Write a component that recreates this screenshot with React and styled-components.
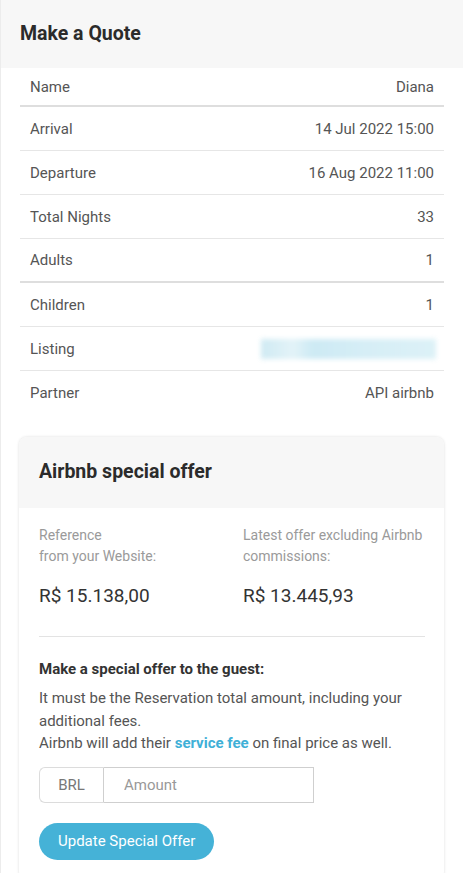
import React from "react";
import styled, {createGlobalStyle} from "styled-components";


const GlobalStyle = createGlobalStyle`
  body {
    margin: 0;
    background: #fff;
    font-family: Roboto, "Liberation Sans", sans-serif;
  }
`;


const Page = styled.div`
  border-left: 1px solid #ececec;
  min-height: 873px;
  box-sizing: border-box;
`;


const Header = styled.div`
  background: #f7f7f7;
  height: 68px;
  display: flex;
  align-items: center;
  padding-left: 19px;
  padding-bottom: 2px;
  box-sizing: border-box;
`;


const Title = styled.h2`
  margin: 0;
  font-size: 19.5px;
  font-weight: 700;
  color: #2b2b2b;
`;


const Table = styled.div`
  margin: 0 19px;
`;


const Row = styled.div`
  display: flex;
  justify-content: space-between;
  align-items: center;
  height: ${p => p.$first ? 37 : p.$thick ? 42 : 43}px;
  padding: 0 10px;
  font-size: 15px;
  color: #555;
  border-bottom: ${p => p.$last ? "none" : p.$thick ? "2px solid #dedede" : "1px solid #e6e6e6"};
`;


const Blurred = styled.span`
  display: inline-block;
  width: 175px;
  height: 20px;
  background: linear-gradient(90deg, #cfeaf3 0%, #e3f3f8 18%, #cdeaf4 30%, #d6eef6 60%, #dcf1f7 100%);
  filter: blur(2.5px);
  margin-right: -2px;
`;


const Card = styled.div`
  margin: 23px 19px 0 18px;
  border-radius: 8px;
  box-shadow: 0 0 3px rgba(0, 0, 0, 0.14);
  overflow: hidden;
  background: #fff;
`;


const CardHeader = styled.div`
  background: #f7f7f7;
  height: 71px;
  display: flex;
  align-items: center;
  padding-left: 20px;
  padding-bottom: 2px;
  box-sizing: border-box;
`;


const CardBody = styled.div`
  padding: 17px 19px 20px 20px;
`;


const Columns = styled.div`
  display: grid;
  grid-template-columns: 204px 1fr;
  padding-bottom: 29px;
  border-bottom: 1px solid #e3e3e3;
`;


const Label = styled.div`
  font-size: 14px;
  line-height: 21px;
  color: #9a9a9a;
`;


const Amount = styled.div`
  font-size: 19px;
  line-height: 22px;
  color: #333;
  margin-top: 18px;
`;


const SubTitle = styled.div`
  font-size: 15px;
  line-height: 18px;
  font-weight: 700;
  color: #333;
  margin-top: 23px;
`;


const Text = styled.p`
  margin: 9px 0 0;
  font-size: 15px;
  line-height: 22.5px;
  color: #555;
`;


const Link = styled.span`
  color: #3fb0d7;
  font-weight: 700;
`;


const InputGroup = styled.div`
  display: flex;
  width: 275px;
  height: 36px;
  margin-top: 12px;
`;


const Addon = styled.div`
  flex: none;
  width: 65px;
  box-sizing: border-box;
  display: flex;
  align-items: center;
  justify-content: center;
  border: 1px solid #dcdcdc;
  border-right: 1px solid #cfcfcf;
  border-radius: 6px 0 0 6px;
  font-size: 15px;
  color: #777;
`;


const Input = styled.input`
  flex: 1;
  min-width: 0;
  width: 0;
  border: 1px solid #cfcfcf;
  border-left: none;
  padding: 0 20px;
  font-family: inherit;
  font-size: 15px;
  outline: none;
  &::placeholder {
    color: #999;
  }
`;


const Button = styled.button`
  margin-top: 20px;
  height: 37px;
  padding: 0 19px;
  border: none;
  border-radius: 19px;
  background: #45b2d7;
  color: #fff;
  font-family: inherit;
  font-size: 15px;
`;


const rows = [
    ["Name", "Diana"],
    ["Arrival", "14 Jul 2022 15:00"],
    ["Departure", "16 Aug 2022 11:00"],
    ["Total Nights", "33"],
    ["Adults", "1"],
    ["Children", "1"],
    ["Listing", null],
    ["Partner", "API airbnb"],
];


const App = () => (
    <Page>
        <GlobalStyle/>
        <Header>
            <Title>Make a Quote</Title>
        </Header>

        <Table>
            {rows.map(([label, value], i) => (
                <Row key={label} $first={i === 0} $thick={i === 0 || i === 4} $last={i === rows.length - 1}>
                    <span>{label}</span>
                    {value === null ? <Blurred/> : <span>{value}</span>}
                </Row>
            ))}
        </Table>

        <Card>
            <CardHeader>
                <Title>Airbnb special offer</Title>
            </CardHeader>
            <CardBody>
                <Columns>
                    <div>
                        <Label>Reference<br/>from your Website:</Label>
                        <Amount>R$ 15.138,00</Amount>
                    </div>
                    <div>
                        <Label>Latest offer excluding Airbnb commissions:</Label>
                        <Amount>R$ 13.445,93</Amount>
                    </div>
                </Columns>

                <SubTitle>Make a special offer to the guest:</SubTitle>
                <Text>
                    It must be the Reservation total amount, including your additional fees.<br/>
                    Airbnb will add their <Link>service fee</Link> on final price as well.
                </Text>

                <InputGroup>
                    <Addon>BRL</Addon>
                    <Input placeholder="Amount"/>
                </InputGroup>

                <Button>Update Special Offer</Button>
            </CardBody>
        </Card>
    </Page>
);


export default App;
